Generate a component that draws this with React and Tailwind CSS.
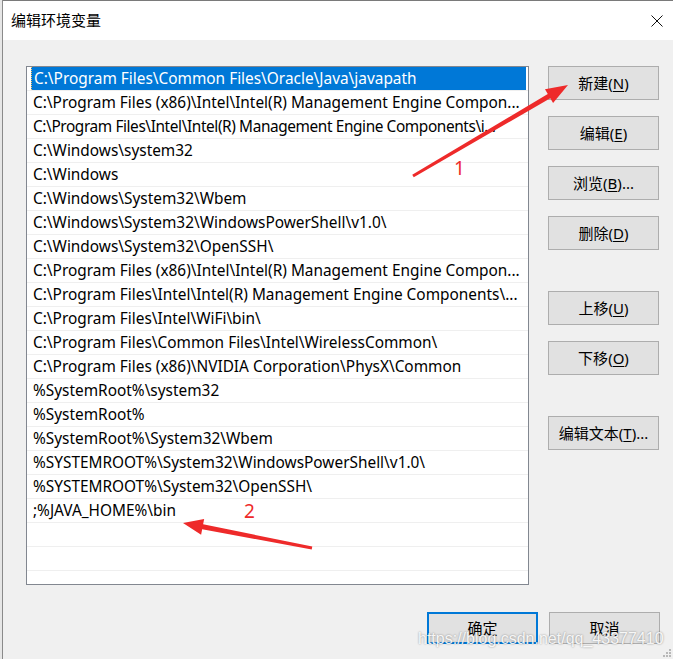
const PATHS = [
  'C:\\Program Files\\Common Files\\Oracle\\Java\\javapath',
  'C:\\Program Files (x86)\\Intel\\Intel(R) Management Engine Compon...',
  'C:\\Program Files\\Intel\\Intel(R) Management Engine Components\\i...',
  'C:\\Windows\\system32',
  'C:\\Windows',
  'C:\\Windows\\System32\\Wbem',
  'C:\\Windows\\System32\\WindowsPowerShell\\v1.0\\',
  'C:\\Windows\\System32\\OpenSSH\\',
  'C:\\Program Files (x86)\\Intel\\Intel(R) Management Engine Compon...',
  'C:\\Program Files\\Intel\\Intel(R) Management Engine Components\\...',
  'C:\\Program Files\\Intel\\WiFi\\bin\\',
  'C:\\Program Files\\Common Files\\Intel\\WirelessCommon\\',
  'C:\\Program Files (x86)\\NVIDIA Corporation\\PhysX\\Common',
  '%SystemRoot%\\system32',
  '%SystemRoot%',
  '%SystemRoot%\\System32\\Wbem',
  '%SYSTEMROOT%\\System32\\WindowsPowerShell\\v1.0\\',
  '%SYSTEMROOT%\\System32\\OpenSSH\\',
  ';%JAVA_HOME%\\bin',
  '',
  '',
];

function Btn({ label, hot, tail = '', primary = false, h = 'h-[34px]' }) {
  return (
    <button
      type="button"
      className={`flex w-[111px] ${h} items-center justify-center bg-[#e1e1e1] text-[15px] text-black ${
        primary ? 'border-2 border-[#0078d7]' : 'border border-[#adadad]'
      }`}
    >
      {hot ? (
        <span>
          {label}(<span className="underline underline-offset-2">{hot}</span>){tail}
        </span>
      ) : (
        <span>{label}</span>
      )}
    </button>
  );
}

// tapered arrow outline: thin tail, wide head
function arrow(tail, tip, headLen, headHalf, w0, w1) {
  const dx = tip[0] - tail[0];
  const dy = tip[1] - tail[1];
  const len = Math.hypot(dx, dy);
  const u = [dx / len, dy / len];
  const n = [-u[1], u[0]];
  const base = [tip[0] - u[0] * headLen, tip[1] - u[1] * headLen];
  const p = (pt, k) => `${pt[0] + n[0] * k},${pt[1] + n[1] * k}`;
  return [
    p(tail, w0),
    p(base, w1),
    p(base, headHalf),
    `${tip[0]},${tip[1]}`,
    p(base, -headHalf),
    p(base, -w1),
    p(tail, -w0),
  ].join(' ');
}

export default function App() {
  return (
    <div className="relative flex h-[659px] w-[673px] overflow-hidden bg-[#f0f0f0] font-['Noto_Sans','Noto_Sans_CJK_SC',sans-serif]">
      <div className="w-[3px] shrink-0 border-r border-[#8a8a8a] bg-[#e6e6e6]" />

      <div className="flex flex-1 flex-col border-t border-[#7a7a7a]">
        {/* title bar */}
        <div className="flex h-[39px] shrink-0 items-center justify-between bg-white pl-[8px] pr-[10px]">
          <span className="text-[15px] text-black">编辑环境变量</span>
          <svg width="12" height="12" viewBox="0 0 12 12">
            <path d="M0.5 0.5 L11.5 11.5 M11.5 0.5 L0.5 11.5" stroke="#111" strokeWidth="1" />
          </svg>
        </div>

        {/* body */}
        <div className="flex flex-1 flex-col pl-[23px] pt-[26px]">
          <div className="flex">
            <div className="h-[519px] w-[503px] overflow-hidden border border-[#828790] bg-white">
              {PATHS.map((p, i) => (
                <div key={i} className="h-[24px] border-b border-[#efefef] pl-[4px]">
                  <div
                    className={`flex h-[23px] items-center overflow-hidden whitespace-nowrap pl-[2px] pr-[2px] pt-[1px] text-[15.4px] ${
                      i === 0
                        ? 'w-[495px] border-l border-dotted border-[#f5c26b] bg-[#0078d7] text-white'
                        : 'text-black'
                    } ${i === 2 ? 'tracking-[-0.4px]' : ''}`}
                  >
                    {p}
                  </div>
                </div>
              ))}
            </div>

            <div className="ml-[19px] flex flex-col">
              <Btn label="新建" hot="N" />
              <div className="mt-[16px]"><Btn label="编辑" hot="E" /></div>
              <div className="mt-[16px]"><Btn label="浏览" hot="B" tail="..." /></div>
              <div className="mt-[16px]"><Btn label="删除" hot="D" /></div>
              <div className="mt-[41px]"><Btn label="上移" hot="U" /></div>
              <div className="mt-[16px]"><Btn label="下移" hot="O" /></div>
              <div className="mt-[41px]"><Btn label="编辑文本" hot="T" tail="..." /></div>
            </div>
          </div>

          <div className="mt-[27px] flex justify-end gap-[11px] pr-[13px]">
            <Btn label="确定" primary h="h-[32px]" />
            <Btn label="取消" h="h-[32px]" />
          </div>
        </div>
      </div>

      {/* annotations */}
      <svg className="pointer-events-none absolute left-0 top-0" width="673" height="659">
        <polygon points={arrow([413, 176], [568, 85], 22, 8, 1.5, 2.5)} fill="#ee2a2a" />
        <polygon points={arrow([312, 548], [183, 523], 20, 8, 1.5, 2.5)} fill="#ee2a2a" />
      </svg>
      <span className="absolute left-[454px] top-[159px] text-[19px] leading-none text-[#ee2a2a]">1</span>
      <span className="absolute left-[244px] top-[502px] text-[19px] leading-none text-[#ee2a2a]">2</span>

      <span className="pointer-events-none absolute left-[418px] top-[627px] font-['Liberation_Sans',sans-serif] text-[16px] text-white/90 [text-shadow:0_0_2px_rgba(0,0,0,0.45)]">
        https://blog.csdn.net/qq_43377410
      </span>

      <svg className="absolute bottom-[1px] right-[1px]" width="9" height="9">
        <rect x="6" y="0" width="2" height="2" fill="#b8b8b8" />
        <rect x="3" y="3" width="2" height="2" fill="#b8b8b8" />
        <rect x="6" y="3" width="2" height="2" fill="#b8b8b8" />
        <rect x="0" y="6" width="2" height="2" fill="#b8b8b8" />
        <rect x="3" y="6" width="2" height="2" fill="#b8b8b8" />
        <rect x="6" y="6" width="2" height="2" fill="#b8b8b8" />
      </svg>
    </div>
  );
}
